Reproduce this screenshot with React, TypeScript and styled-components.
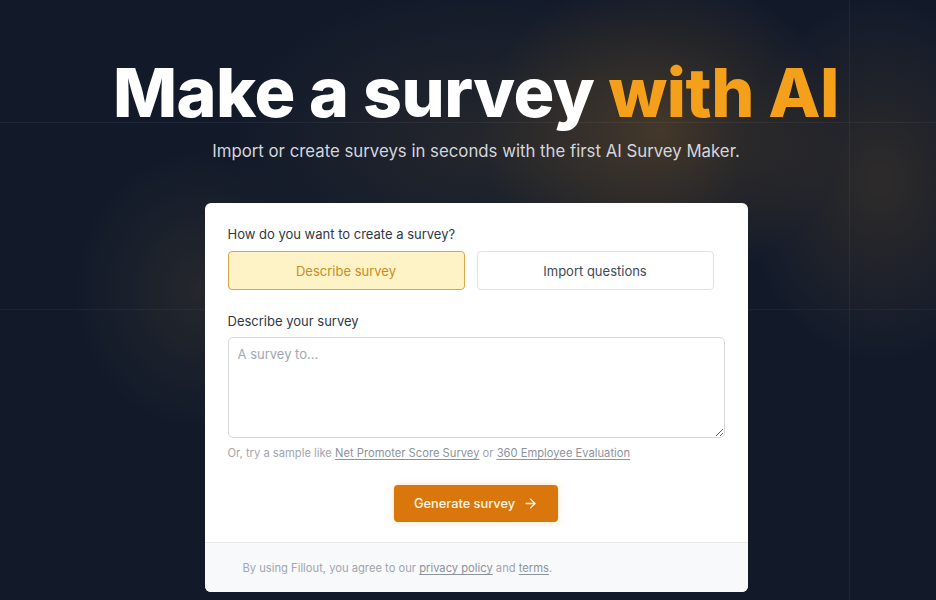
import React from "react";
import styled, { createGlobalStyle } from "styled-components";

const GlobalStyle = createGlobalStyle`
  * { box-sizing: border-box; }
  html, body { margin: 0; padding: 0; }
  body {
    font-family: Inter, "Noto Sans", sans-serif;
    background: #121a2a;
  }
`;

const Page = styled.main`
  position: relative;
  width: 936px;
  height: 600px;
  overflow: hidden;
  display: flex;
  flex-direction: column;
  align-items: center;
  padding: 52px 0 0 16px;
  background:
    linear-gradient(90deg, transparent 849px, rgba(255, 255, 255, 0.05) 849px, rgba(255, 255, 255, 0.05) 850px, transparent 850px),
    linear-gradient(180deg, transparent 122px, rgba(255, 255, 255, 0.05) 122px, rgba(255, 255, 255, 0.05) 123px, transparent 123px),
    linear-gradient(180deg, transparent 309px, rgba(255, 255, 255, 0.04) 309px, rgba(255, 255, 255, 0.04) 310px, transparent 310px),
    radial-gradient(ellipse 260px 220px at 660px 130px, rgba(150, 105, 40, 0.35), transparent 70%),
    radial-gradient(ellipse 200px 260px at 880px 180px, rgba(130, 95, 45, 0.25), transparent 70%),
    radial-gradient(ellipse 180px 200px at 200px 290px, rgba(120, 100, 55, 0.18), transparent 70%),
    radial-gradient(ellipse 360px 220px at 480px 140px, rgba(90, 75, 50, 0.25), transparent 70%),
    #121a2a;
`;

const Title = styled.h1`
  margin: 0;
  font-size: 68px;
  font-weight: 800;
  letter-spacing: -0.5px;
  line-height: 80px;
  color: #ffffff;
  white-space: nowrap;
`;

const Accent = styled.span`
  color: #f5a01a;
`;

const Subtitle = styled.p`
  margin: 7px 0 0;
  font-size: 16.8px;
  line-height: 24px;
  color: #d4d6dc;
`;

const Card = styled.section`
  margin-top: 40px;
  width: 543px;
  background: #ffffff;
  border-radius: 6px;
  overflow: hidden;
`;

const Body = styled.div`
  padding: 22px 23px 20px;
  display: flex;
  flex-direction: column;
`;

const Label = styled.label`
  font-size: 13px;
  line-height: 18px;
  color: #2f3745;
`;

const Choices = styled.div`
  display: grid;
  grid-template-columns: 237px 237px;
  gap: 12px;
  margin-top: 8px;
  margin-bottom: 22px;
`;

const Choice = styled.button<{ $active?: boolean }>`
  height: 39px;
  border-radius: 4px;
  font-family: inherit;
  font-size: 13px;
  border: 1px solid ${(p) => (p.$active ? "#d9a74a" : "#dfe2e7")};
  background: ${(p) => (p.$active ? "#fef3c7" : "#ffffff")};
  color: ${(p) => (p.$active ? "#d08a1c" : "#414957")};
`;

const TextArea = styled.textarea`
  margin-top: 7px;
  height: 101px;
  resize: vertical;
  border: 1px solid #d5d8dd;
  border-radius: 5px;
  padding: 8px 9px;
  font-family: inherit;
  font-size: 13px;
  color: #1f2937;
  &::placeholder {
    color: #a3a8b1;
  }
`;

const Hint = styled.p`
  margin: 7px 0 0;
  font-size: 11.2px;
  line-height: 16px;
  color: #a1a6ae;
`;

const HintLink = styled.a`
  color: #8d939c;
  text-decoration: underline;
  text-underline-offset: 2px;
`;

const Actions = styled.div`
  display: flex;
  justify-content: center;
  margin-top: 24px;
`;

const Generate = styled.button`
  display: flex;
  align-items: center;
  gap: 8px;
  height: 37px;
  padding: 0 20px;
  border: none;
  border-radius: 4px;
  background: #d9770c;
  color: #fff5e3;
  font-family: inherit;
  font-size: 12.8px;
  font-weight: 500;
  box-shadow: 0 0 6px rgba(245, 160, 40, 0.3);
`;

const Footer = styled.footer`
  border-top: 1px solid #e8eaee;
  background: #f8f9fb;
  padding: 17px 38px 16px;
  font-size: 11.2px;
  line-height: 16px;
  color: #a1a6ae;
`;

const FooterLink = styled.a`
  color: #8d939c;
  text-decoration: underline;
  text-underline-offset: 2px;
`;

function ArrowRight() {
  return (
    <svg width="15" height="15" viewBox="0 0 24 24" fill="none" stroke="currentColor" strokeWidth="2.2" strokeLinecap="round" strokeLinejoin="round">
      <path d="M5 12h14" />
      <path d="m12 5 7 7-7 7" />
    </svg>
  );
}

export default function App() {
  return (
    <>
      <GlobalStyle />
      <Page>
        <Title>
          Make a survey <Accent>with AI</Accent>
        </Title>
        <Subtitle>Import or create surveys in seconds with the first AI Survey Maker.</Subtitle>
        <Card>
          <Body>
            <Label>How do you want to create a survey?</Label>
            <Choices>
              <Choice $active>Describe survey</Choice>
              <Choice>Import questions</Choice>
            </Choices>
            <Label>Describe your survey</Label>
            <TextArea placeholder="A survey to..." />
            <Hint>
              Or, try a sample like <HintLink>Net Promoter Score Survey</HintLink> or{" "}
              <HintLink>360 Employee Evaluation</HintLink>
            </Hint>
            <Actions>
              <Generate>
                Generate survey <ArrowRight />
              </Generate>
            </Actions>
          </Body>
          <Footer>
            By using Fillout, you agree to our <FooterLink>privacy policy</FooterLink> and{" "}
            <FooterLink>terms</FooterLink>.
          </Footer>
        </Card>
      </Page>
    </>
  );
}
